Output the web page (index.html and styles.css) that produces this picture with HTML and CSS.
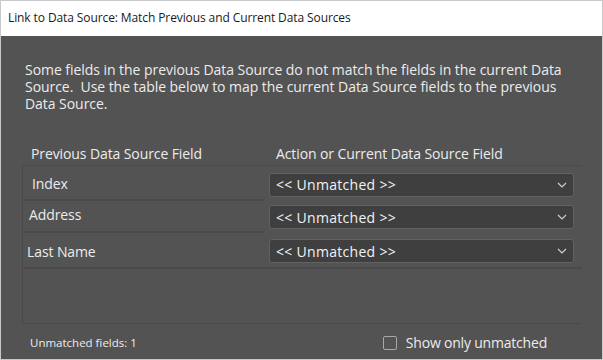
FILE: index.html
```html
<!DOCTYPE html>
<html lang="en">
<head>
    <meta charset="UTF-8">
    <title>Link to Data Source</title>
    <link rel="stylesheet" href="styles.css">
</head>
<body>
    <div class="dialog">
        <div class="title">Link to Data Source: Match Previous and Current Data Sources</div>
        <div class="content">
            <p class="intro">Some fields in the previous Data Source do not match the fields in the current Data Source.&nbsp; Use the table below to map the current Data Source fields to the previous Data Source.</p>
            <div class="heads">
                <div class="col-prev">Previous Data Source Field</div>
                <div class="col-cur">Action or Current Data Source Field</div>
            </div>
            <div class="table">
                <div class="row row-index">
                    <div class="name">Index</div>
                    <div class="select">&lt;&lt; Unmatched &gt;&gt;<span class="chev"><svg width="10" height="6" viewBox="0 0 10 6"><path d="M1 1l4 4 4-4" fill="none" stroke="#cfcfcf" stroke-width="1.2"/></svg></span></div>
                </div>
                <div class="row row-address">
                    <div class="name">Address</div>
                    <div class="select">&lt;&lt; Unmatched &gt;&gt;<span class="chev"><svg width="10" height="6" viewBox="0 0 10 6"><path d="M1 1l4 4 4-4" fill="none" stroke="#cfcfcf" stroke-width="1.2"/></svg></span></div>
                </div>
                <div class="row row-last">
                    <div class="name">Last Name</div>
                    <div class="select">&lt;&lt; Unmatched &gt;&gt;<span class="chev"><svg width="10" height="6" viewBox="0 0 10 6"><path d="M1 1l4 4 4-4" fill="none" stroke="#cfcfcf" stroke-width="1.2"/></svg></span></div>
                </div>
            </div>
            <div class="footer">
                <div class="count">Unmatched fields: 1</div>
                <label class="check"><span class="box"></span>Show only unmatched</label>
            </div>
        </div>
    </div>
</body>
</html>
```

FILE: styles.css
```css
html, body {
    margin: 0;
    height: 100%;
}
body {
    font-family: "Open Sans", "Noto Sans", sans-serif;
    font-size: 14px;
    background-color: #ffffff;
}
.dialog {
    box-sizing: border-box;
    width: 603px;
    height: 360px;
    border: 1px solid #c9c9c9;
    display: flex;
    flex-direction: column;
}
.title {
    height: 35px;
    line-height: 34px;
    padding-left: 7px;
    color: #1a1a1a;
    background-color: #ffffff;
    font-size: 12px;
    letter-spacing: -0.1px;
}
.content {
    flex: 1;
    background-color: #535353;
    color: #ececec;
    display: flex;
    flex-direction: column;
}
.intro {
    margin: 0;
    padding: 25px 24px 0 24px;
    line-height: 17px;
    letter-spacing: -0.05px;
}
.heads {
    display: flex;
    margin-top: 33px;
    padding-left: 30px;
    height: 20px;
    line-height: 18px;
    letter-spacing: -0.1px;
}
.col-prev {
    width: 245px;
}
.table {
    margin-left: 21px;
    width: 559px;
    height: 159px;
    border-top: 1px solid #4b4b4b;
    border-left: 1px solid #4a4a4a;
    border-bottom: 1px solid #4a4a4a;
    box-sizing: border-box;
}
.row {
    display: flex;
    align-items: center;
    position: relative;
}
.row::after {
    content: "";
    position: absolute;
    left: 1px;
    bottom: 0;
    width: 240px;
    height: 2px;
    background-color: #4a4a4a;
}
.row-index {
    height: 35px;
}
.row-address {
    height: 32px;
}
.row-last {
    height: 36px;
}
.row-last::after {
    width: 558px;
}
.name {
    letter-spacing: -0.1px;
}
.row-index .name {
    padding-left: 9px;
    width: 237px;
}
.row-address .name {
    padding-left: 6px;
    width: 240px;
    margin-top: -6px;
}
.row-last .name {
    padding-left: 4px;
    width: 242px;
}
.select {
    box-sizing: border-box;
    width: 305px;
    height: 24px;
    border: 1px solid #626262;
    border-radius: 3px;
    background-color: #3f3f3f;
    color: #f2f2f2;
    padding-left: 6px;
    line-height: 21px;
    display: flex;
    align-items: center;
    position: relative;
    letter-spacing: 0.3px;
}
.row-index .select {
    margin-top: 2px;
}
.chev {
    position: absolute;
    right: 6px;
    top: 8px;
    line-height: 0;
}
.footer {
    flex: 1;
    display: flex;
    align-items: center;
    justify-content: space-between;
    padding: 2px 55px 0 29px;
}
.count {
    font-size: 11.5px;
}
.check {
    display: flex;
    align-items: center;
    gap: 9px;
    font-size: 14px;
    letter-spacing: -0.2px;
}
.box {
    box-sizing: border-box;
    width: 14px;
    height: 14px;
    border: 1px solid #a8a8a8;
    border-radius: 2px;
}
```
